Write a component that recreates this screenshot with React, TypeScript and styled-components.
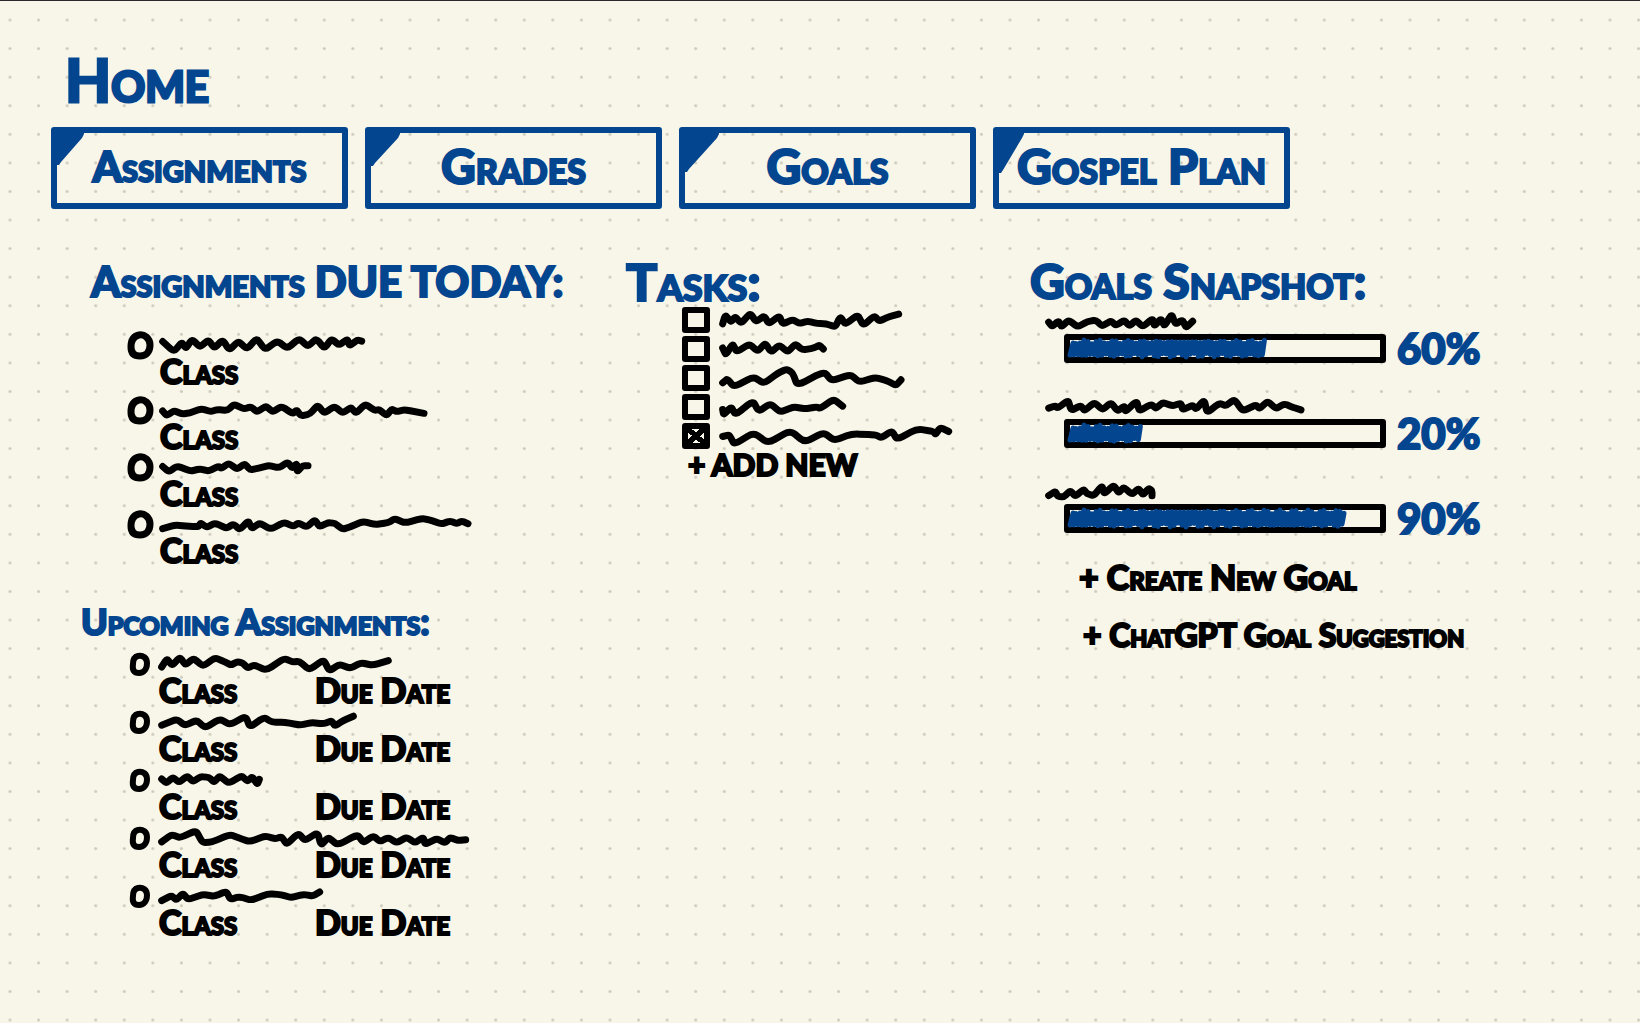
import React from "react";
import styled, { createGlobalStyle } from "styled-components";

const BLUE = "#03458f";
const INK = "#000000";
const PAPER = "#f8f6e9";
const HAND = 'Lato, "Open Sans", "Liberation Sans", sans-serif';

const GlobalStyle = createGlobalStyle`
  *, *::before, *::after { box-sizing: border-box; }
  body { margin: 0; background: ${PAPER}; font-family: ${HAND}; }
  h1, h2, p, ul { margin: 0; padding: 0; }
  ul { list-style: none; }
`;

const Page = styled.main`
  position: relative;
  isolation: isolate;
  min-height: 100vh;
  border-top: 1px solid #2a262b;
  padding: 30px 0 40px 51px;
`;

const Paper = styled.svg`
  position: absolute;
  inset: 0;
  width: 100%;
  height: 100%;
  z-index: -1;
`;

const Title = styled.h1`
  padding-left: 14px;
  color: ${BLUE};
  font-size: 60px;
  line-height: 96px;
  font-weight: 700;
  font-variant-caps: small-caps;
  -webkit-text-stroke: 3px ${BLUE};
`;

const Nav = styled.nav`
  display: grid;
  grid-template-columns: repeat(4, minmax(0, 297px));
  gap: 17px;
`;

const Tab = styled.button<{ $size: number }>`
  position: relative;
  height: 82px;
  padding: 0 0 4px;
  border: 6px solid ${BLUE};
  border-radius: 3px;
  background: transparent;
  color: ${BLUE};
  font-family: ${HAND};
  font-size: ${(p) => p.$size}px;
  line-height: 66px;
  font-weight: 900;
  font-variant-caps: small-caps;
  white-space: nowrap;
  -webkit-text-stroke: 2px ${BLUE};
`;

const Corner = styled.svg`
  position: absolute;
  top: -2px;
  left: -2px;
`;

const Columns = styled.div`
  display: grid;
  grid-template-columns: minmax(0, 575fr) minmax(0, 404fr) minmax(0, 610fr);
  align-items: start;
  margin-top: 49px;
`;

const Section = styled.section<{ $indent?: number; $above?: number }>`
  padding-left: ${(p) => p.$indent ?? 0}px;
  margin-top: ${(p) => p.$above ?? 0}px;
`;

const Heading = styled.h2<{ $size: number }>`
  color: ${BLUE};
  font-size: ${(p) => p.$size}px;
  line-height: 46px;
  font-weight: 900;
  font-variant-caps: small-caps;
  white-space: nowrap;
  -webkit-text-stroke: 2px ${BLUE};
`;

const AssignmentList = styled.ul<{ $above: number; $indent: number; $gap: number }>`
  display: grid;
  gap: ${(p) => p.$gap}px;
  margin-top: ${(p) => p.$above}px;
  padding-left: ${(p) => p.$indent}px;
`;

const Assignment = styled.li<{ $roomy?: boolean }>`
  display: grid;
  grid-template-columns: 34px 1fr;
  grid-template-rows: 30px 22px;
  align-items: center;
  margin-bottom: ${(p) => (p.$roomy ? 8 : 0)}px;
`;

const Details = styled.div`
  grid-column: 2;
  display: grid;
  grid-template-columns: 156px 1fr;
`;

const Note = styled.span`
  color: ${INK};
  font-size: 34px;
  line-height: 24px;
  font-weight: 900;
  font-variant-caps: small-caps;
  white-space: nowrap;
  -webkit-text-stroke: 2px ${INK};
`;

const Tasks = styled.ul`
  display: grid;
  gap: 3px;
  margin-top: 3px;
  padding-left: 56px;
`;

const Task = styled.li`
  display: flex;
  align-items: center;
  gap: 10px;
  height: 26px;
`;

const Check = styled.input`
  appearance: none;
  width: 28px;
  height: 26px;
  margin: 0;
  border: 6px solid ${INK};
  border-radius: 3px;
  &:checked {
    background:
      linear-gradient(41deg, transparent 38%, ${INK} 38%, ${INK} 62%, transparent 62%),
      linear-gradient(139deg, transparent 36%, ${INK} 36%, ${INK} 64%, transparent 64%);
  }
`;

const AddButton = styled.button<{ $indent: number; $size: number }>`
  display: block;
  margin: 0 0 0 ${(p) => p.$indent}px;
  padding: 0;
  border: 0;
  background: transparent;
  color: ${INK};
  font-family: ${HAND};
  font-size: ${(p) => p.$size}px;
  line-height: 30px;
  font-weight: 900;
  font-variant-caps: small-caps;
  white-space: nowrap;
  -webkit-text-stroke: 2px ${INK};
`;

const Goals = styled.ul`
  display: grid;
  gap: 31px;
  margin-top: 5px;
  padding-left: 16px;
`;

const Goal = styled.li`
  display: grid;
  grid-template-rows: 24px 30px;
`;

const Meter = styled.div`
  display: flex;
  align-items: center;
  gap: 11px;
  padding-left: 18px;
`;

const Bar = styled.div`
  flex: 0 1 322px;
  height: 29px;
  border: 6px solid ${INK};
  border-radius: 3px;
`;

const Percent = styled.span`
  color: ${BLUE};
  font-size: 42px;
  line-height: 30px;
  font-weight: 900;
  -webkit-text-stroke: 2px ${BLUE};
`;

const Actions = styled.div`
  display: grid;
  justify-items: start;
  gap: 28px;
  margin-top: 29px;
`;

const Drawing = styled.svg`
  display: block;
  flex: none;
  overflow: visible;
`;

const smooth = (pts: number[][]) => {
  let d = `M${pts[0][0]} ${pts[0][1]}`;
  for (let i = 1; i < pts.length - 1; i++) {
    const [x, y] = pts[i];
    const [px, py] = pts[i - 1];
    const [nx, ny] = pts[i + 1];
    const ax = x + (px - x) * 0.3;
    const ay = y + (py - y) * 0.3;
    const bx = x + (nx - x) * 0.3;
    const by = y + (ny - y) * 0.3;
    d += `L${ax} ${ay}Q${x} ${y} ${bx} ${by}`;
  }
  const last = pts[pts.length - 1];
  return `${d}L${last[0]} ${last[1]}`;
};

/* A scribbled line of writing; the strokes are noted at three units to a pixel. */
function Squiggle({ line }: { line: string }) {
  const pts = line.split(" ").map((p) => p.split(",").map(Number));
  const xs = pts.map((p) => p[0]);
  const ys = pts.map((p) => p[1]);
  const left = Math.min(...xs) - 8;
  const right = Math.max(...xs) + 8;
  const middle = (Math.min(...ys) + Math.max(...ys)) / 2;
  const width = Math.round((right - left) / 3);
  return (
    <Drawing width={width} height={24} viewBox={`${left} ${middle - 36} ${width * 3} 72`} aria-hidden="true">
      <path d={smooth(pts)} fill="none" stroke={INK} strokeWidth={21} strokeLinecap="round" strokeLinejoin="round" />
    </Drawing>
  );
}

function Marker({ big }: { big?: boolean }) {
  return big ? (
    <Drawing width={30} height={30} viewBox="0 0 30 30" aria-hidden="true">
      <path d="M13 5C18 4 24 8 24 15C24 22 20 26 14 26C8 26 5 23 5 17C5 10 8 6 13 5Z" fill="none" stroke={INK} strokeWidth={7} strokeLinejoin="round" />
    </Drawing>
  ) : (
    <Drawing width={30} height={30} viewBox="0 0 30 30" aria-hidden="true">
      <path d="M13 7C18 6 22 9 22 14C22 20 19 24 14 24C9 24 7 21 8 15C8 11 9 8 13 7Z" fill="none" stroke={INK} strokeWidth={6} strokeLinejoin="round" />
    </Drawing>
  );
}

/* Felt-tip hatching that colours a bar in from the left. */
function Hatching({ share }: { share: number }) {
  const width = Math.round(310 * share);
  let d = "M3 3";
  for (let x = 3, i = 0; x < width - 2; x += 2, i++) {
    const jitter = Math.sin(i * 2.3) + Math.sin(i * 0.9);
    d += i % 2 ? `L${x + 1} ${2 + jitter}` : `L${x - 3} ${15 + jitter}`;
  }
  return (
    <Drawing width={`${share * 100}%`} height={17} viewBox={`0 0 ${width} 17`} preserveAspectRatio="none" aria-hidden="true">
      <path d={d} fill="none" stroke={BLUE} strokeWidth={5} strokeLinecap="round" strokeLinejoin="round" />
    </Drawing>
  );
}

const TABS = [
  { name: "Assignments", size: 42, w: 29, h: 34 },
  { name: "Grades", size: 48, w: 31, h: 35 },
  { name: "Goals", size: 48, w: 36, h: 41 },
  { name: "Gospel Plan", size: 48, w: 27, h: 42 },
];

const DUE_TODAY = [
  "261,101 295,132 318,103 331,122 349,94 373,118 398,96 416,121 441,96 461,127 488,100 514,124 543,91 568,126 605,99 635,122 670,92 697,116 722,92 746,122 768,93 790,112 815,94 822,114 845,96 858,100",
  "250,304 262,318 285,303 308,313 330,310 366,297 395,306 412,300 445,302 464,284 495,298 515,291 533,307 560,289 580,307 607,290 640,312 652,301 665,319 692,313 715,286 735,311 765,290 790,310 815,293 830,311 858,283 885,302 900,300 922,318 937,298 952,306 975,300 1034,311",
  "252,469 270,485 296,467 335,483 365,476 390,483 420,468 428,475 450,459 475,477 498,461 515,479 540,474 570,466 600,473 628,456 640,474 655,460 655,485 672,467 688,467",
  "248,652 285,641 330,645 355,646 362,635 380,648 405,635 440,651 460,638 480,655 505,628 515,652 540,635 572,654 612,633 640,645 655,635 680,647 705,625 718,646 745,634 765,636 788,654 815,645 850,630 885,640 925,634 945,622 975,635 1028,621 1055,628 1085,638 1110,629 1130,637 1145,629 1164,637",
];

const UPCOMING = [
  "252,228 268,203 283,224 307,198 323,222 348,202 376,226 412,200 440,212 460,222 480,212 495,216 510,231 530,222 566,238 620,202 645,213 665,211 695,237 738,206 755,240 785,220 818,232 850,215 885,223 932,209",
  "240,402 285,384 310,403 345,387 370,410 415,383 445,401 492,375 505,408 547,378 570,393 610,393 655,402 690,394 725,398 750,389 760,405 785,388 815,375",
  "238,573 252,585 272,568 290,583 315,564 332,581 355,566 380,568 395,583 412,564 440,586 478,563 495,580 510,566 525,589 531,574",
  "250,754 280,732 305,742 353,720 372,756 400,755 455,732 480,742 515,754 560,736 590,745 610,739 625,762 660,728 680,750 718,726 728,765 750,740 778,764 838,732 855,757 885,736 905,753 930,741 955,757 985,740 1010,757 1035,740 1040,762 1075,744 1100,757 1115,741 1140,750 1162,748",
  "256,918 285,903 300,916 320,896 335,915 380,899 415,905 450,890 462,914 490,906 525,917 575,897 615,900 645,909 680,899 710,904 730,892",
];

const TASKS = [
  "250,212 258,185 275,207 288,190 305,211 333,180 350,206 375,188 388,212 420,188 430,213 460,199 480,211 505,204 535,211 560,212 588,221 603,190 618,214 655,185 672,217 705,188 720,204 750,190 778,183",
  "250,300 260,321 280,287 292,312 330,288 355,310 378,285 395,313 420,291 445,312 468,288 490,306 525,300 540,291 552,303",
  "248,385 262,373 282,397 340,367 372,387 415,355 440,344 458,355 472,393 552,351 575,379 632,360 658,383 705,369 740,378 768,393 783,376",
  "252,466 255,482 278,458 290,482 343,440 360,472 395,448 425,474 465,458 500,464 535,458 545,463 585,435 612,456",
  "262,555 282,550 297,579 355,543 398,575 465,537 508,572 565,543 597,567 650,547 720,550 738,559 770,538 785,564 845,532 895,540 900,549 915,528 940,540",
];

const GOALS = [
  { line: "88,217 98,230 118,213 126,231 148,211 175,231 205,215 230,211 248,229 275,213 290,227 315,211 330,229 350,211 370,231 400,206 405,229 425,206 435,229 457,193 468,223 490,210 500,234 520,214", share: 0.64, label: "60%" },
  { line: "78,475 98,468 105,475 137,451 145,482 175,467 185,483 215,458 240,480 265,458 285,484 305,468 308,486 342,453 350,484 385,463 400,476 420,458 450,468 475,460 480,480 510,466 520,478 545,450 553,489 590,460 610,468 635,448 660,484 700,465 710,477 735,454 760,477 785,462 810,472 835,480", share: 0.24, label: "20%" },
  { line: "95,735 115,722 122,737 140,739 160,720 175,737 200,716 210,729 230,735 255,705 262,730 290,703 305,727 320,710 345,731 365,713 378,733 395,713 405,720 405,735", share: 0.9, label: "90%" },
];

const DOT_PITCH = 200 / 7;

export default function App() {
  return (
    <>
      <GlobalStyle />
      <Page>
        <Paper aria-hidden="true">
          <defs>
            <pattern id="dots" x={10 - DOT_PITCH / 2} y={19 - DOT_PITCH / 2} width={DOT_PITCH} height={DOT_PITCH} patternUnits="userSpaceOnUse">
              <circle cx={DOT_PITCH / 2} cy={DOT_PITCH / 2} r={1.5} fill="#cdcabb" />
            </pattern>
          </defs>
          <rect width="100%" height="100%" fill="url(#dots)" />
        </Paper>
        <Title>Home</Title>
        <Nav>
          {TABS.map(({ name, size, w, h }) => (
            <Tab key={name} type="button" $size={size}>
              <Corner width={w} height={h} viewBox={`0 0 ${w} ${h}`} aria-hidden="true">
                <path d={`M0 0H${w}V3L${w - 2} 7L6 ${h - 3}L4 ${h}H0Z`} fill={BLUE} />
              </Corner>
              {name}
            </Tab>
          ))}
        </Nav>
        <Columns>
          <div>
            <Section $indent={40}>
              <Heading $size={42}>Assignments DUE TODAY:</Heading>
              <AssignmentList $above={26} $indent={35} $gap={5}>
                {DUE_TODAY.map((line, i) => (
                  <Assignment key={line} $roomy={i === 0}>
                    <Marker big />
                    <Squiggle line={line} />
                    <Details>
                      <Note>Class</Note>
                    </Details>
                  </Assignment>
                ))}
              </AssignmentList>
            </Section>
            <Section $indent={30} $above={37}>
              <Heading $size={36}>Upcoming Assignments:</Heading>
              <AssignmentList $above={5} $indent={44} $gap={6}>
                {UPCOMING.map((line) => (
                  <Assignment key={line}>
                    <Marker />
                    <Squiggle line={line} />
                    <Details>
                      <Note>Class</Note>
                      <Note>Due Date</Note>
                    </Details>
                  </Assignment>
                ))}
              </AssignmentList>
            </Section>
          </div>
          <Section>
            <Heading $size={52}>Tasks:</Heading>
            <Tasks>
              {TASKS.map((line, i) => (
                <Task key={line}>
                  <Check type="checkbox" aria-label={`Task ${i + 1}`} defaultChecked={i === 4} />
                  <Squiggle line={line} />
                </Task>
              ))}
            </Tasks>
            <AddButton type="button" $indent={62} $size={30}>+ ADD NEW</AddButton>
          </Section>
          <Section>
            <Heading $size={48}>Goals Snapshot:</Heading>
            <Goals>
              {GOALS.map(({ line, share, label }) => (
                <Goal key={label}>
                  <Squiggle line={line} />
                  <Meter>
                    <Bar role="progressbar" aria-valuenow={parseInt(label)} aria-valuemin={0} aria-valuemax={100}>
                      <Hatching share={share} />
                    </Bar>
                    <Percent>{label}</Percent>
                  </Meter>
                </Goal>
              ))}
            </Goals>
            <Actions>
              <AddButton type="button" $indent={49} $size={34}>+ Create New Goal</AddButton>
              <AddButton type="button" $indent={53} $size={32}>+ ChatGPT Goal Suggestion</AddButton>
            </Actions>
          </Section>
        </Columns>
      </Page>
    </>
  );
}
